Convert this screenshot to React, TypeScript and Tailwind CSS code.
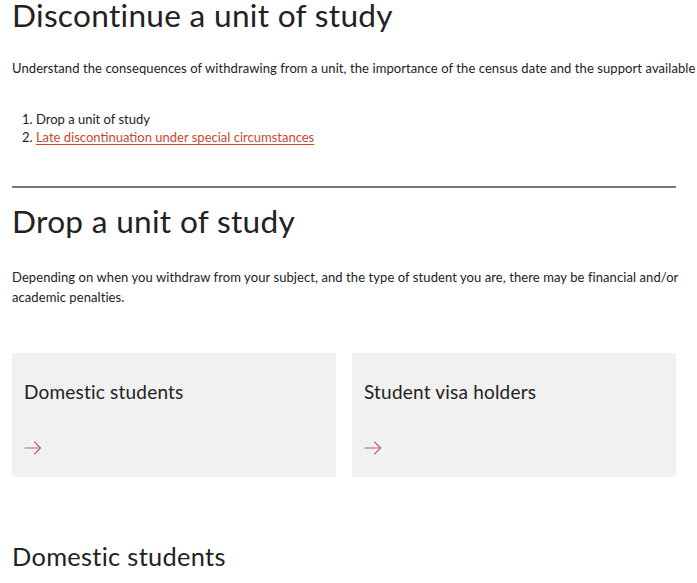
import React from "react";

function Arrow() {
  return (
    <svg width="18" height="14" viewBox="0 0 18 14" fill="none" stroke="#c0646c" strokeWidth="1.1" strokeLinecap="round" strokeLinejoin="round">
      <path d="M1 7h15.5" />
      <path d="M10.5 1l6 6-6 6" />
    </svg>
  );
}

function Card({ title }: { title: string }) {
  return (
    <div className="bg-[#f1f1f1] h-[124px] px-[12px] pt-[27px] flex flex-col">
      <h3 className="text-[19px] leading-[24px] text-[#222] tracking-[0.2px]">{title}</h3>
      <div className="mt-[37px]"><Arrow /></div>
    </div>
  );
}

export default function App() {
  return (
    <div className="bg-white min-h-[583px] px-[12px] font-['Lato',sans-serif] text-[#222] overflow-hidden">
      <h1 className="text-[31.6px] leading-[31px] tracking-[0.3px]">Discontinue a unit of study</h1>
      <p className="mt-[29px] text-[13px] leading-[16px] tracking-[0.08px] whitespace-nowrap">Understand the consequences of withdrawing from a unit, the importance of the census date and the support available</p>
      <ol className="mt-[34px] pl-[10px] text-[13px] leading-[18px] list-none">
        <li>1. Drop a unit of study</li>
        <li>2. <a href="#" className="text-[#c8482f] underline underline-offset-2 decoration-1">Late discontinuation under special circumstances</a></li>
      </ol>
      <div className="mt-[40px] mr-[9px] h-[2px] bg-[#777]" />
      <h2 className="mt-[15px] text-[31.6px] leading-[36px] tracking-[0.3px]">Drop a unit of study</h2>
      <p className="mt-[28px] max-w-[680px] text-[13px] leading-[20px] tracking-[0.08px]">Depending on when you withdraw from your subject, and the type of student you are, there may be financial and/or academic penalties.</p>
      <div className="mt-[46px] mr-[9px] grid grid-cols-2 gap-[16px]">
        <Card title="Domestic students" />
        <Card title="Student visa holders" />
      </div>
      <h3 className="mt-[64px] text-[25.4px] leading-[30px] tracking-[0.3px]">Domestic students</h3>
    </div>
  );
}
